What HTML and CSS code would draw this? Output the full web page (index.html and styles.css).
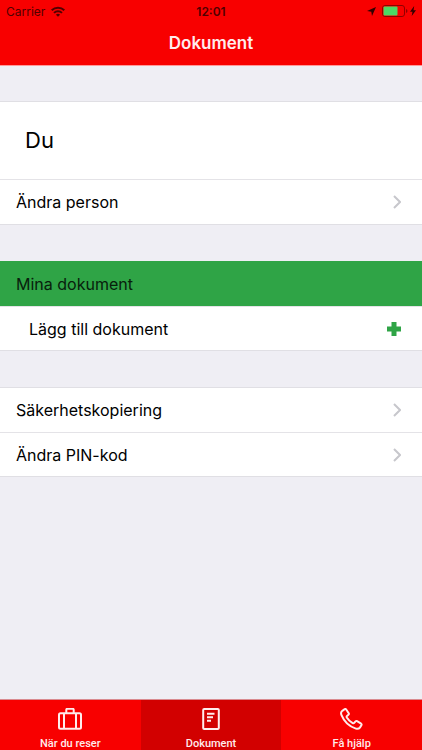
FILE: index.html
```html
<!DOCTYPE html>
<html lang="sv">
<head>
<meta charset="utf-8">
<meta name="viewport" content="width=device-width, initial-scale=1">
<title>Dokument</title>
<link rel="stylesheet" href="styles.css">
</head>
<body>
<header class="header">
  <div class="status">
    <div class="status-left">
      <span>Carrier</span>
      <svg width="14" height="11" viewBox="0 0 14 11" fill="none" stroke="currentColor" stroke-width="2" aria-hidden="true"><path d="M.7 4.200a9 9 0 0 1 12.600 0M3 6.900a5.700 5.700 0 0 1 8 0"/><path d="M7 10.800 4.900 8.700a3 3 0 0 1 4.200 0z" fill="currentColor" stroke="none"/></svg>
    </div>
    <span class="clock">12:01</span>
    <div class="status-right">
      <svg width="9" height="9" viewBox="0 0 9 9" fill="currentColor" aria-hidden="true"><path d="M9 0 5 9 4.300 4.700 0 4z"/></svg>
      <svg width="26" height="12" viewBox="0 0 26 12" aria-hidden="true"><rect x=".5" y=".5" width="22" height="11" rx="2.500" fill="none" stroke="#8f0000"/><rect x="1.500" y="1.500" width="14" height="9" rx="1" fill="#4cd964"/><path d="M24 4v4q1.500-.5 1.500-2T24 4z" fill="#8f0000"/></svg>
      <svg class="bolt" width="6" height="10" viewBox="0 0 6 10" fill="currentColor" aria-hidden="true"><path d="M4.200 0 0 5.700h2.500L1.700 10 6 4.200H3.500z"/></svg>
    </div>
  </div>
  <h1 class="title">Dokument</h1>
</header>
<main class="content">
  <section class="group">
    <h2 class="person">Du</h2>
    <button class="row" type="button"><span>Ändra person</span><svg class="chevron" width="8" height="14" viewBox="0 0 8 14" aria-hidden="true"><path d="m1 1 6 6-6 6"/></svg></button>
  </section>
  <section class="group highlighted">
    <h2 class="row section-title">Mina dokument</h2>
    <button class="row indented" type="button"><span>Lägg till dokument</span><svg width="14" height="14" viewBox="0 0 14 14" fill="#2fa446" aria-hidden="true"><path d="M4.500 0h5v4.500H14v5H9.500V14h-5V9.500H0v-5h4.500z"/></svg></button>
  </section>
  <section class="group">
    <button class="row" type="button"><span>Säkerhetskopiering</span><svg class="chevron" width="8" height="14" viewBox="0 0 8 14" aria-hidden="true"><path d="m1 1 6 6-6 6"/></svg></button>
    <button class="row" type="button"><span>Ändra PIN-kod</span><svg class="chevron" width="8" height="14" viewBox="0 0 8 14" aria-hidden="true"><path d="m1 1 6 6-6 6"/></svg></button>
  </section>
</main>
<nav class="tabs">
  <a class="tab" href="#reser">
    <svg width="24" height="22" viewBox="0 0 24 22" aria-hidden="true"><rect x="1" y="5.300" width="22" height="15.500" rx="1.500"/><path d="M8.300 5V1.800q0-1 1-1h5.400q1 0 1 1V5M6 5.300v15.500M18 5.300v15.500"/></svg>
    <span>När du reser</span>
  </a>
  <a class="tab active" href="#dokument" aria-current="page">
    <svg width="24" height="22" viewBox="0 0 24 22" aria-hidden="true"><rect x="4.200" y="1" width="15.600" height="20" rx="1"/><path d="M8 5.700h7.500M8 9.200h6M8 12.700h4"/></svg>
    <span>Dokument</span>
  </a>
  <a class="tab" href="#hjalp">
    <svg width="24" height="22" viewBox="0 0 24 22" aria-hidden="true"><path d="M2.300 2.800 4.700 1.200q.9-.5 1.500.3l2.500 3.800q.5.900-.3 1.500L7 7.900q-.7.600-.2 1.500 2.200 3.600 5.900 5.700.9.500 1.500-.2l1.300-1.500q.7-.7 1.600-.2l4 2.500q.8.600.3 1.500l-1.500 2.400q-1.300 1.700-4 1Q5.700 17.500 1.500 7.200.3 4.200 2.300 2.800z"/></svg>
    <span>Få hjälp</span>
  </a>
</nav>
</body>
</html>
```
FILE: styles.css
```css
* {
  box-sizing: border-box;
}

body {
  display: flex;
  flex-direction: column;
  min-height: 100vh;
  margin: 0;
  background: #efeef4;
  color: #000;
  font-family: Inter, "Liberation Sans", sans-serif;
  font-size: 16px;
}

.header {
  height: 66px;
  background: #f80000;
  border-bottom: 1px solid #f99;
}

.status {
  display: grid;
  grid-template-columns: 1fr auto 1fr;
  align-items: center;
  height: 22px;
  padding: 0 6px;
  color: #500000;
  font-size: 12px;
}

.status-left,
.status-right {
  display: flex;
  align-items: center;
  gap: 6px;
}

.status-right {
  justify-content: flex-end;
  color: #300000;
}

.bolt {
  margin-left: -4px;
}

.clock {
  font-weight: 600;
}

.title {
  margin: 0;
  color: #ffecec;
  font-size: 17px;
  font-weight: 600;
  line-height: 42px;
  text-align: center;
}

.content {
  flex: 1;
  display: flex;
  flex-direction: column;
  gap: 36px;
  padding: 35px 0;
}

.group {
  border-top: 1px solid #e0dfe4;
  border-bottom: 1px solid #e0dfe4;
  background: #fff;
}

.highlighted {
  border-top-color: #2fa446;
}

.person {
  margin: 0;
  padding: 0 25px;
  font-size: 22px;
  font-weight: 400;
  line-height: 77px;
}

.row {
  display: flex;
  align-items: center;
  justify-content: space-between;
  width: 100%;
  height: 44px;
  margin: 0;
  padding: 0 21px 0 16px;
  border: 0;
  background: none;
  color: inherit;
  font: inherit;
  text-align: left;
}

.row + .row,
.person + .row {
  border-top: 1px solid #e4e3e7;
}

.person + .row {
  height: 45px;
}

.section-title {
  background: #2fa446;
  color: #08200c;
}

.indented {
  padding-left: 29px;
}

.chevron {
  fill: none;
  stroke: #c7c7cc;
  stroke-width: 2;
}

.tabs {
  display: grid;
  grid-template-columns: repeat(3, 1fr);
  height: 51px;
  border-top: 1px solid #d98a8f;
}

.tab {
  display: flex;
  flex-direction: column;
  align-items: center;
  gap: 7px;
  padding-top: 8px;
  background: #f80000;
  color: #ffecec;
  font-family: Roboto, "Liberation Sans", sans-serif;
  font-size: 11px;
  font-weight: 500;
  line-height: 14px;
  text-decoration: none;
}

.tab.active {
  background: #d20000;
}

.tab svg {
  fill: none;
  stroke: currentColor;
  stroke-width: 2;
}
```
